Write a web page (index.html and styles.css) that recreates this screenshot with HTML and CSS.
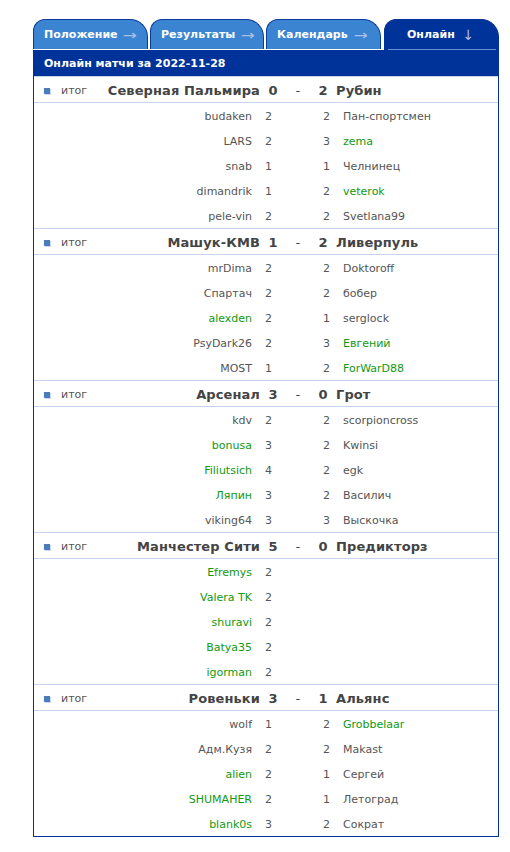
FILE: index.html
```html
<!DOCTYPE html>
<html lang="ru">
<head>
  <meta charset="UTF-8">
  <title>Онлайн матчи</title>
  <link rel="stylesheet" href="styles.css">
</head>
<body>

  <div class="board">
    <!-- вкладки -->
    <div class="tabs">
      <div class="tab t1">Положение <span class="arr">→</span></div>
      <div class="tab t2">Результаты <span class="arr">→</span></div>
      <div class="tab t3">Календарь <span class="arr">→</span></div>
      <div class="tab active">Онлайн <span class="arr">↓</span></div>
    </div>

    <div class="panel">
      <div class="panel-title">Онлайн матчи за 2022-11-28</div>

      <!-- матч 1 -->
      <div class="match">
        <div class="head">
          <div class="home"><i class="ico"></i><span class="state">итог</span><b>Северная Пальмира</b></div>
          <b class="sc">0</b><b class="dash">-</b><b class="sc">2</b><b class="away">Рубин</b>
        </div>
        <div class="row"><span class="pl">budaken</span><span class="g1">2</span><span class="g2">2</span><span class="pl2">Пан-спортсмен</span></div>
        <div class="row"><span class="pl">LARS</span><span class="g1">2</span><span class="g2">3</span><span class="pl2 on">zema</span></div>
        <div class="row"><span class="pl">snab</span><span class="g1">1</span><span class="g2">1</span><span class="pl2">Челнинец</span></div>
        <div class="row"><span class="pl">dimandrik</span><span class="g1">1</span><span class="g2">2</span><span class="pl2 on">veterok</span></div>
        <div class="row"><span class="pl">pele-vin</span><span class="g1">2</span><span class="g2">2</span><span class="pl2">Svetlana99</span></div>
      </div>

      <!-- матч 2 -->
      <div class="match">
        <div class="head">
          <div class="home"><i class="ico"></i><span class="state">итог</span><b>Машук-КМВ</b></div>
          <b class="sc">1</b><b class="dash">-</b><b class="sc">2</b><b class="away">Ливерпуль</b>
        </div>
        <div class="row"><span class="pl">mrDima</span><span class="g1">2</span><span class="g2">2</span><span class="pl2">Doktoroff</span></div>
        <div class="row"><span class="pl">Спартач</span><span class="g1">2</span><span class="g2">2</span><span class="pl2">бобер</span></div>
        <div class="row"><span class="pl on">alexden</span><span class="g1">2</span><span class="g2">1</span><span class="pl2">serglock</span></div>
        <div class="row"><span class="pl">PsyDark26</span><span class="g1">2</span><span class="g2">3</span><span class="pl2 on">Евгений</span></div>
        <div class="row"><span class="pl">MOST</span><span class="g1">1</span><span class="g2">2</span><span class="pl2 on">ForWarD88</span></div>
      </div>

      <!-- матч 3 -->
      <div class="match">
        <div class="head">
          <div class="home"><i class="ico"></i><span class="state">итог</span><b>Арсенал</b></div>
          <b class="sc">3</b><b class="dash">-</b><b class="sc">0</b><b class="away">Грот</b>
        </div>
        <div class="row"><span class="pl">kdv</span><span class="g1">2</span><span class="g2">2</span><span class="pl2">scorpioncross</span></div>
        <div class="row"><span class="pl on">bonusa</span><span class="g1">3</span><span class="g2">2</span><span class="pl2">Kwinsi</span></div>
        <div class="row"><span class="pl on">Filiutsich</span><span class="g1">4</span><span class="g2">2</span><span class="pl2">egk</span></div>
        <div class="row"><span class="pl on">Ляпин</span><span class="g1">3</span><span class="g2">2</span><span class="pl2">Василич</span></div>
        <div class="row"><span class="pl">viking64</span><span class="g1">3</span><span class="g2">3</span><span class="pl2">Выскочка</span></div>
      </div>

      <!-- матч 4 -->
      <div class="match">
        <div class="head">
          <div class="home"><i class="ico"></i><span class="state">итог</span><b>Манчестер Сити</b></div>
          <b class="sc">5</b><b class="dash">-</b><b class="sc">0</b><b class="away">Предикторз</b>
        </div>
        <div class="row"><span class="pl on">Efremys</span><span class="g1">2</span><span class="g2"></span><span class="pl2"></span></div>
        <div class="row"><span class="pl on">Valera TK</span><span class="g1">2</span><span class="g2"></span><span class="pl2"></span></div>
        <div class="row"><span class="pl on">shuravi</span><span class="g1">2</span><span class="g2"></span><span class="pl2"></span></div>
        <div class="row"><span class="pl on">Batya35</span><span class="g1">2</span><span class="g2"></span><span class="pl2"></span></div>
        <div class="row"><span class="pl on">igorman</span><span class="g1">2</span><span class="g2"></span><span class="pl2"></span></div>
      </div>

      <!-- матч 5 -->
      <div class="match">
        <div class="head">
          <div class="home"><i class="ico"></i><span class="state">итог</span><b>Ровеньки</b></div>
          <b class="sc">3</b><b class="dash">-</b><b class="sc">1</b><b class="away">Альянс</b>
        </div>
        <div class="row"><span class="pl">wolf</span><span class="g1">1</span><span class="g2">2</span><span class="pl2 on">Grobbelaar</span></div>
        <div class="row"><span class="pl">Адм.Кузя</span><span class="g1">2</span><span class="g2">2</span><span class="pl2">Makast</span></div>
        <div class="row"><span class="pl on">alien</span><span class="g1">2</span><span class="g2">1</span><span class="pl2">Сергей</span></div>
        <div class="row"><span class="pl on">SHUMAHER</span><span class="g1">2</span><span class="g2">1</span><span class="pl2">Летоград</span></div>
        <div class="row"><span class="pl on">blank0s</span><span class="g1">3</span><span class="g2">2</span><span class="pl2">Сократ</span></div>
      </div>
    </div>
  </div>

</body>
</html>
```

FILE: styles.css
```css
/* ===== база ===== */
*,*::before,*::after{margin:0;padding:0;box-sizing:border-box}
body {
  background:#fff;
  font-family:"DejaVu Sans",Verdana,sans-serif;
  font-size:11px;
  color:#555;
}
.board {
  width:466px;
  margin:19px 0 0 33px;
}

/* ===== вкладки ===== */
.tabs {
  display:flex;
  align-items:flex-end;
  gap:2px;
}
.tab {
  flex:none;
  width:115px;
  height:30px;
  margin-bottom:1px;
  padding:5px 0 0 10px;
  background:#3b84d2;
  border:1px solid #0a3a9a;
  border-bottom:none;
  border-radius:12px 18px 0 0;
  color:#fff;
  font-weight:bold;
  font-size:11px;
}
.tab.t2 { width:114px }
.tab .arr {
  display:inline-block;
  color:#a8bfe6;
  font-weight:normal;
  font-size:14px;
  margin-left:3px;
  transform:translateY(2px) scaleX(1.2);
}
.tab.active {
  position:relative;
  height:31px;
  margin-bottom:0;
  margin-left:1px;
  padding-left:22px;
  background:#003399;
  border-color:#003399;
}
.tab.active .arr { margin-left:4px; transform:translateY(2px) }
.tab.active::after {
  content:"";
  position:absolute;
  left:3px; right:2px; bottom:0;
  height:1px;
  background:#6e8fd2;
}

/* ===== панель ===== */
.panel {
  border:1px solid #003399;
  border-top:none;
}
.panel-title {
  height:26px;
  line-height:27px;
  margin:0 -1px;
  padding-left:11px;
  background:#003399;
  color:#fff;
  font-weight:bold;
  font-size:11px;
}
.match { border-top:1px solid #c6d3ee }
.match:first-of-type { border-top-color:#fff }

.head, .row {
  display:grid;
  height:25px;
  padding-top:2px;
  align-items:center;
}
.head {
  grid-template-columns:226px 26px 24px 26px 1fr;
  height:26px;
  border-bottom:1px solid #c6d3ee;
  color:#444;
  font-size:13px;
  letter-spacing:.1px;
}
.head .home {
  display:flex;
  align-items:center;
  padding-left:10px;
}
.ico {
  width:6px;height:6px;
  background:#4a7bbd;
  box-shadow:1px 1px 0 #c9d6ee;
  margin-right:11px;
}
.state {
  font-size:11px;
  letter-spacing:0;
  color:#555;
}
.head .home b { margin-left:auto }
.head .sc, .head .dash { text-align:center }
.head .dash { font-weight:normal }

.row {
  grid-template-columns:218px 32px 46px 1fr;
}
.row .pl { text-align:right }
.row .g1 { padding-left:13px }
.row .g2 { text-align:right }
.row .pl2 { padding-left:13px }
.on { color:#129912 }
```
